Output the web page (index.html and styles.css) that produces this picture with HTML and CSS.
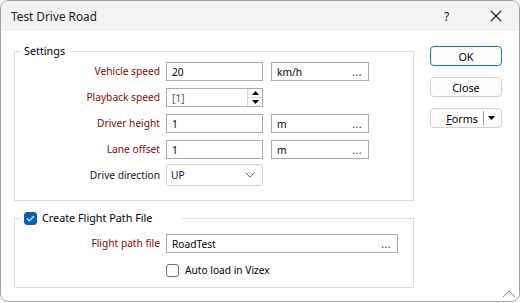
FILE: index.html
```html
<!DOCTYPE html>
<html>
<head>
<meta charset="utf-8">
<link rel="stylesheet" href="styles.css">
</head>
<body>
<div class="window">
  <div class="titlebar">
    <span class="title">Test Drive Road</span>
    <span class="help">?</span>
    <span class="close-x">
      <svg width="12" height="12" viewBox="0 0 12 12"><path d="M1 1 L11 11 M11 1 L1 11" stroke="#1a1a1a" stroke-width="1.1" fill="none"/></svg>
    </span>
  </div>
  <div class="content">
    <div class="main">
      <fieldset class="group settings">
        <legend class="legend">Settings</legend>
        <div class="form">
          <label class="lbl req">Vehicle speed</label>
          <div class="field">20</div>
          <div class="field unit">km/h<span class="dots">...</span></div>

          <label class="lbl req">Playback speed</label>
          <div class="field spin"><span class="muted">[1]</span>
            <span class="spinbtns">
              <span class="sb"><svg width="7" height="4" viewBox="0 0 7 4"><path d="M0 4 L3.5 0 L7 4 Z" fill="#000"/></svg></span>
              <span class="sb"><svg width="7" height="4" viewBox="0 0 7 4"><path d="M0 0 L3.5 4 L7 0 Z" fill="#000"/></svg></span>
            </span>
          </div>
          <span></span>

          <label class="lbl req">Driver height</label>
          <div class="field">1</div>
          <div class="field unit">m<span class="dots">...</span></div>

          <label class="lbl req">Lane offset</label>
          <div class="field">1</div>
          <div class="field unit">m<span class="dots">...</span></div>

          <label class="lbl dark">Drive direction</label>
          <div class="combo"><span class="navy">UP</span>
            <svg width="10" height="6" viewBox="0 0 10 6"><path d="M0.5 0.5 L5 5 L9.5 0.5" stroke="#666" stroke-width="1" fill="none"/></svg>
          </div>
          <span></span>
        </div>
      </fieldset>

      <fieldset class="group flight">
        <legend class="legend legend-check">
          <span class="check on"><svg width="9" height="7" viewBox="0 0 9 7"><path d="M1 3.5 L3.3 5.8 L8 1" stroke="#fff" stroke-width="1.1" fill="none"/></svg></span>
          Create Flight Path File
        </legend>
        <div class="form2">
          <label class="lbl req">Flight path file</label>
          <div class="field wide">RoadTest<span class="dots">...</span></div>
          <span></span>
          <div class="cbrow"><span class="check"></span>Auto load in Vizex</div>
        </div>
      </fieldset>
    </div>

    <div class="buttons">
      <button class="btn default">OK</button>
      <button class="btn">Close</button>
      <button class="btn split"><span class="split-label"><u>F</u>orms</span><span class="divider"></span><svg width="7" height="4" viewBox="0 0 7 4"><path d="M0 0 L3.5 4 L7 0 Z" fill="#000"/></svg></button>
    </div>
  </div>
  <svg class="grip" width="14" height="8" viewBox="0 0 14 8"><path d="M1 7 L7 1 L13 7" stroke="#8a8a8a" stroke-width="1" fill="none"/></svg>
</div>
</body>
</html>
```

FILE: styles.css
```css
* { box-sizing: border-box; }
html, body { margin: 0; padding: 0; background: #ffffff; }
body {
  font-family: "Noto Sans", "Open Sans", sans-serif;
  font-size: 10.2px;
  color: #000;
}
.window {
  position: relative;
  width: 520px;
  height: 302px;
  border: 1px solid #a3a3a3;
  border-radius: 8px;
  overflow: hidden;
  background: #fff;
}
.titlebar {
  height: 30px;
  background: #f3f3f3;
  display: flex;
  align-items: center;
  padding-left: 10px;
}
.title { font-size: 11.8px; flex: 1; color: #1a1a1a; }
.help { font-size: 12px; width: 12px; margin-right: 34px; color: #1a1a1a; }
.close-x { display: flex; margin-right: 17px; }

.content { display: flex; }
.main { width: 413px; padding-left: 13px; }

.group {
  margin: 0;
  border: 1px solid #dcdcdc;
  padding: 0;
  min-width: 0;
}
.settings { margin-top: 12px; padding-top: 3px; padding-bottom: 15px; }
.legend {
  margin-left: 6px;
  padding: 0 5px 0 3px;
  height: 16px;
  line-height: 16px;
  font-size: 10.8px;
}
.form {
  display: grid;
  grid-template-columns: 145px 97px 100px;
  grid-auto-rows: 19px;
  column-gap: 6px;
  row-gap: 7px;
}
.lbl {
  text-align: right;
  line-height: 19px;
  white-space: nowrap;
}
.req { color: #7a0a0a; }
.dark { color: #10122c; }
.field {
  height: 19px;
  border: 1px solid #ababab;
  background: #fff;
  display: flex;
  align-items: center;
  padding-left: 5px;
  padding-right: 6px;
  white-space: nowrap;
}
.unit { margin-left: 2px; justify-content: space-between; }
.wide { justify-content: space-between; width: 232px; }
.dots { color: #141450; letter-spacing: 0.5px; }
.muted { color: #555; flex: 1; }
.navy { color: #10123a; }
.spin { padding-right: 0; }
.spinbtns {
  display: flex;
  flex-direction: column;
  width: 15px;
  height: 17px;
  border-left: 1px solid #d6d6d6;
}
.sb {
  flex: 1;
  display: flex;
  align-items: center;
  justify-content: center;
  background: #fafafa;
}
.sb + .sb { border-top: 1px solid #d6d6d6; }
.combo {
  height: 22px;
  margin-top: -2px;
  border: 1px solid #d0d0d0;
  border-radius: 3px;
  display: flex;
  align-items: center;
  justify-content: space-between;
  padding: 0 7px 0 4px;
  background: #fff;
}

.flight { margin-top: 9px; padding-top: 8px; padding-bottom: 9px; }
.legend-check {
  display: flex;
  align-items: center;
  padding-right: 30px;
}
.check {
  width: 13px;
  height: 13px;
  border: 1px solid #6e6e6e;
  border-radius: 3px;
  background: #fff;
  display: inline-flex;
  align-items: center;
  justify-content: center;
  margin-right: 5px;
  flex: none;
}
.check.on { background: #0a5fb4; border-color: #0a5fb4; }
.form2 {
  display: grid;
  grid-template-columns: 145px 232px;
  column-gap: 6px;
  row-gap: 9px;
}
.form2 .lbl { line-height: 19px; }
.cbrow { display: flex; align-items: center; height: 16px; }
.cbrow .check { margin-right: 6px; }

.buttons {
  margin-left: 16px;
  padding-top: 15px;
  display: flex;
  flex-direction: column;
  gap: 11px;
  width: 72px;
}
.btn {
  height: 20px;
  width: 72px;
  border: 1px solid #d0d0d0;
  border-radius: 4px;
  background: #fdfdfd;
  font-family: inherit;
  font-size: 10.8px;
  color: #000;
  padding: 0;
}
.btn.default { border-color: #1b6fc2; }
.split {
  display: flex;
  align-items: center;
  justify-content: flex-end;
  padding-right: 6px;
}
.split-label { margin-right: 5px; }
.divider { width: 1px; height: 14px; background: #9a9a9a; margin-right: 4px; }
.grip { position: absolute; right: 3px; bottom: 3px; }
```
